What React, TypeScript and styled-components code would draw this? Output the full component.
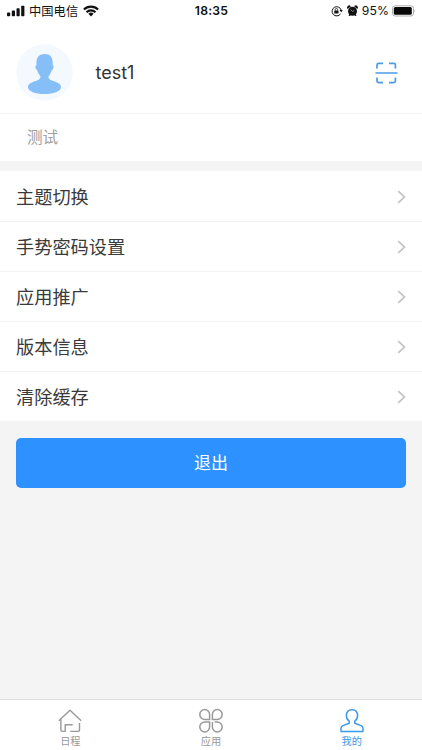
import React from 'react';
import styled, { createGlobalStyle } from 'styled-components';

const Global = createGlobalStyle`
  * { box-sizing: border-box; }
  body { margin: 0; background: #f4f4f4; font-family: Inter, "Noto Sans CJK SC", sans-serif; }
  svg { display: block; flex: none; }
`;

const Screen = styled.div`
  width: 100%;
  height: 750px;
  display: flex;
  flex-direction: column;
  background: #f4f4f4;
  overflow: hidden;
`;

const StatusBar = styled.header`
  height: 24px;
  flex: none;
  display: grid;
  grid-template-columns: 1fr auto 1fr;
  align-items: start;
  background: #fff;
  color: #111;
  padding: 0 6px 0 7px;
`;

const StatusGroup = styled.div<{ $end?: boolean }>`
  height: 21px;
  display: flex;
  align-items: center;
  justify-content: ${(p) => (p.$end ? 'flex-end' : 'flex-start')};
`;

const Carrier = styled.span`
  margin: 0 5px 0 4px;
  font-size: 12.3px;
  line-height: 21px;
  padding-top: 1px;
`;

const Clock = styled.time`
  font-size: 12.2px;
  font-weight: 600;
  line-height: 22px;
  letter-spacing: 0.25px;
`;

const Percent = styled.span`
  margin: 0 3px 0 4px;
  font-size: 12.2px;
  line-height: 22px;
  letter-spacing: 0.1px;
  padding-top: 1px;
`;

const StatusIcons = styled.div`
  display: flex;
  align-items: center;
  gap: 4px;
`;

const Profile = styled.section`
  height: 90px;
  flex: none;
  display: flex;
  align-items: center;
  padding: 8px 24px 0 16px;
  background: #fff;
  border-bottom: 1px solid #f2f2f2;
`;

const UserName = styled.h1`
  flex: 1;
  margin: 0 0 0 22.5px;
  font-size: 18px;
  font-weight: 400;
  line-height: 26px;
  color: #333;
`;

const Department = styled.div`
  height: 47px;
  flex: none;
  padding-left: 27px;
  background: #fff;
  color: #a0a0a0;
  font-size: 15.6px;
  line-height: 48px;
`;

const Menu = styled.nav`
  margin-top: 10px;
  padding-top: 1px;
  flex: none;
  background: #fff;
`;

const MenuRow = styled.div`
  height: 50px;
  display: flex;
  align-items: center;
  justify-content: space-between;
  padding: 0 16px;
  border-bottom: 1px solid #f3f3f3;
  color: #3a3a3a;
  font-size: 18.2px;
  line-height: 50px;
`;

const LogoutButton = styled.button`
  height: 50px;
  flex: none;
  margin: 16px 16px 0;
  padding: 0;
  border: 0;
  border-radius: 5px;
  background: #2d92ff;
  color: #fff;
  font: inherit;
  font-size: 17px;
  line-height: 50px;
`;

const TabBar = styled.footer`
  height: 51px;
  flex: none;
  margin-top: auto;
  display: grid;
  grid-template-columns: repeat(3, 1fr);
  background: #fff;
  border-top: 1px solid #dedede;
`;

const Tab = styled.div<{ $active?: boolean }>`
  display: flex;
  flex-direction: column;
  align-items: center;
  padding-top: 8px;
  color: ${(p) => (p.$active ? '#3b99e8' : '#999')};
  font-size: 10.2px;
  line-height: 15px;
`;

const TabLabel = styled.span`
  margin-top: 1px;
`;

const SignalIcon = () => (
  <svg width="18" height="12" viewBox="0 0 18 12" fill="currentColor">
    <rect x="0" y="7.5" width="3.2" height="3.7" rx=".8" />
    <rect x="4.8" y="5.6" width="3.2" height="5.6" rx=".8" />
    <rect x="9.5" y="3.3" width="3.2" height="7.9" rx=".8" />
    <rect x="14.2" y=".8" width="3.2" height="10.4" rx=".8" />
  </svg>
);

const WifiIcon = () => (
  <svg width="16" height="12" viewBox="0 0 16 12" fill="none" stroke="currentColor" strokeWidth="2.1">
    <path d="M.9 4.5a10.1 10.1 0 0 1 14.2 0M3.5 7.2a6.4 6.4 0 0 1 9 0" />
    <path d="M5.4 8.8a3.8 3.8 0 0 1 5.2 0L8 11.5Z" fill="currentColor" stroke="none" />
  </svg>
);

const RotationLockIcon = () => (
  <svg width="12" height="12" viewBox="0 0 12 12" fill="none" stroke="currentColor">
    <path d="M9.5 8.9A4.6 4.6 0 1 1 10.1 5" strokeWidth="1" />
    <path d="m8.5 5.1 3.3 0-1.6 2.1Z" fill="currentColor" stroke="none" />
    <rect x="3.3" y="5.4" width="4.2" height="3" rx=".4" fill="currentColor" stroke="none" />
    <path d="M4.2 5.5V4.7a1.2 1.2 0 0 1 2.4 0v.8" strokeWidth=".8" />
  </svg>
);

const AlarmIcon = () => (
  <svg width="11" height="12" viewBox="0 0 11 12" fill="currentColor">
    <circle cx="5.5" cy="6.2" r="4.5" />
    <path d="M.7 4.1A2 2 0 0 1 3.9 1.2ZM10.3 4.1A2 2 0 0 0 7.1 1.2ZM1.5 10.7l1.2-2 1.4 1-1.4 1.4ZM9.5 10.7l-1.2-2-1.4 1 1.4 1.4Z" />
    <path d="M3.5 4.5 5.6 6.5 7.3 5.4" fill="none" stroke="#ccc" strokeWidth=".6" />
  </svg>
);

const BatteryIcon = () => (
  <svg width="24" height="12" viewBox="0 0 24 12">
    <rect x=".5" y=".8" width="21" height="10.2" rx="2.6" fill="none" stroke="#999" strokeWidth=".8" />
    <rect x="1.8" y="2.1" width="18" height="7.6" rx="1.5" fill="#080808" />
    <path d="M22.5 4.2q1.4 1.7 0 3.4Z" fill="#999" />
  </svg>
);

const Avatar = () => (
  <svg width="57" height="57" viewBox="0 0 57 57">
    <circle cx="28.5" cy="28.5" r="28.2" fill="#f3f9ff" />
    <path
      d="M28.9 10C23.5 10 20.4 13.4 20.4 18.5v2.7c-1.5.5-1.2 4 .7 4.9.8 2.6 1.8 4.4 3.3 6.1.3 2.2-.9 3.3-3.4 4.2-4 1.4-9.1 3-9.1 6.5 0 4.2 7.5 7.1 16.6 7.1S45 47.1 45 42.9c0-3.5-5.1-5.1-9.1-6.5-2.5-.9-3.7-2-3.3-4.2 1.5-1.7 2.5-3.5 3.3-6.1 1.9-.9 2.2-4.4.8-4.9v-2.7C36.7 13.4 34 10 28.9 10Z"
      fill="#86bff8"
    />
  </svg>
);

const ScanIcon = () => (
  <svg width="23" height="22" viewBox="0 0 23 22" fill="none" stroke="#4a9bea" strokeWidth="1.7">
    <path d="M2 6.5V3q0-1.6 1.6-1.6H8M14 1.4h4.8Q20.4 1.4 20.4 3v3.5M2 15.5V19q0 1.6 1.6 1.6H8M14 20.6h4.8q1.6 0 1.6-1.6v-3.5M.5 11h22" />
  </svg>
);

const ChevronIcon = () => (
  <svg width="9" height="14" viewBox="0 0 9 14" fill="none" stroke="#c2c2c2" strokeWidth="1.7">
    <path d="m1.2 1.1 6.3 5.9-6.3 5.9" />
  </svg>
);

const HomeIcon = () => (
  <svg width="24" height="25" viewBox="0 0 24 25" fill="none" stroke="currentColor" strokeWidth="1.4" strokeLinejoin="round">
    <path d="M.8 12.8 12 2.2l11.2 10.6M2.9 11.2v11.1q0 1.1 1.1 1.1h3.2v-6.7h7.5M12.3 23.4h8.1q1.1 0 1.1-1.1v-7.4" />
  </svg>
);

const AppsIcon = () => (
  <svg width="24" height="25" viewBox="0 0 24 25" fill="none" stroke="currentColor" strokeWidth="1.5">
    <path d="M10.6 11.4H5.7a4.9 4.9 0 1 1 4.9-4.9ZM13.4 11.4V6.5a4.9 4.9 0 1 1 4.9 4.9ZM10.6 14.1V19a4.9 4.9 0 1 1-4.9-4.9ZM15.6 14.1h2.7a4.9 4.9 0 1 1-4.9 4.9v-4.9" />
  </svg>
);

const PersonIcon = () => (
  <svg width="24" height="25" viewBox="0 0 24 25" fill="none" stroke="currentColor" strokeWidth="1.5" strokeLinejoin="round">
    <path d="M9.2 13.2C7.3 12 6.4 10 6.4 7.6c0-3.6 2.1-5.9 5.6-5.9s5.6 2.3 5.6 5.9c0 2.4-.9 4.4-2.8 5.6v2.1l6.2 2.3c1.4.5 2 1.4 2 2.8v3H1v-3c0-1.4.6-2.3 2-2.8l6.2-2.3Z" />
  </svg>
);

const menuItems = ['主题切换', '手势密码设置', '应用推广', '版本信息', '清除缓存'];

const tabs = [
  { label: '日程', Icon: HomeIcon },
  { label: '应用', Icon: AppsIcon },
  { label: '我的', Icon: PersonIcon, active: true },
];

export default function App() {
  return (
    <>
      <Global />
      <Screen>
        <StatusBar>
          <StatusGroup>
            <SignalIcon />
            <Carrier>中国电信</Carrier>
            <WifiIcon />
          </StatusGroup>
          <Clock>18:35</Clock>
          <StatusGroup $end>
            <StatusIcons>
              <RotationLockIcon />
              <AlarmIcon />
            </StatusIcons>
            <Percent>95%</Percent>
            <BatteryIcon />
          </StatusGroup>
        </StatusBar>
        <Profile>
          <Avatar />
          <UserName>test1</UserName>
          <ScanIcon />
        </Profile>
        <Department>测试</Department>
        <Menu>
          {menuItems.map((item) => (
            <MenuRow key={item}>
              {item}
              <ChevronIcon />
            </MenuRow>
          ))}
        </Menu>
        <LogoutButton>退出</LogoutButton>
        <TabBar>
          {tabs.map(({ label, Icon, active }) => (
            <Tab key={label} $active={active}>
              <Icon />
              <TabLabel>{label}</TabLabel>
            </Tab>
          ))}
        </TabBar>
      </Screen>
    </>
  );
}
